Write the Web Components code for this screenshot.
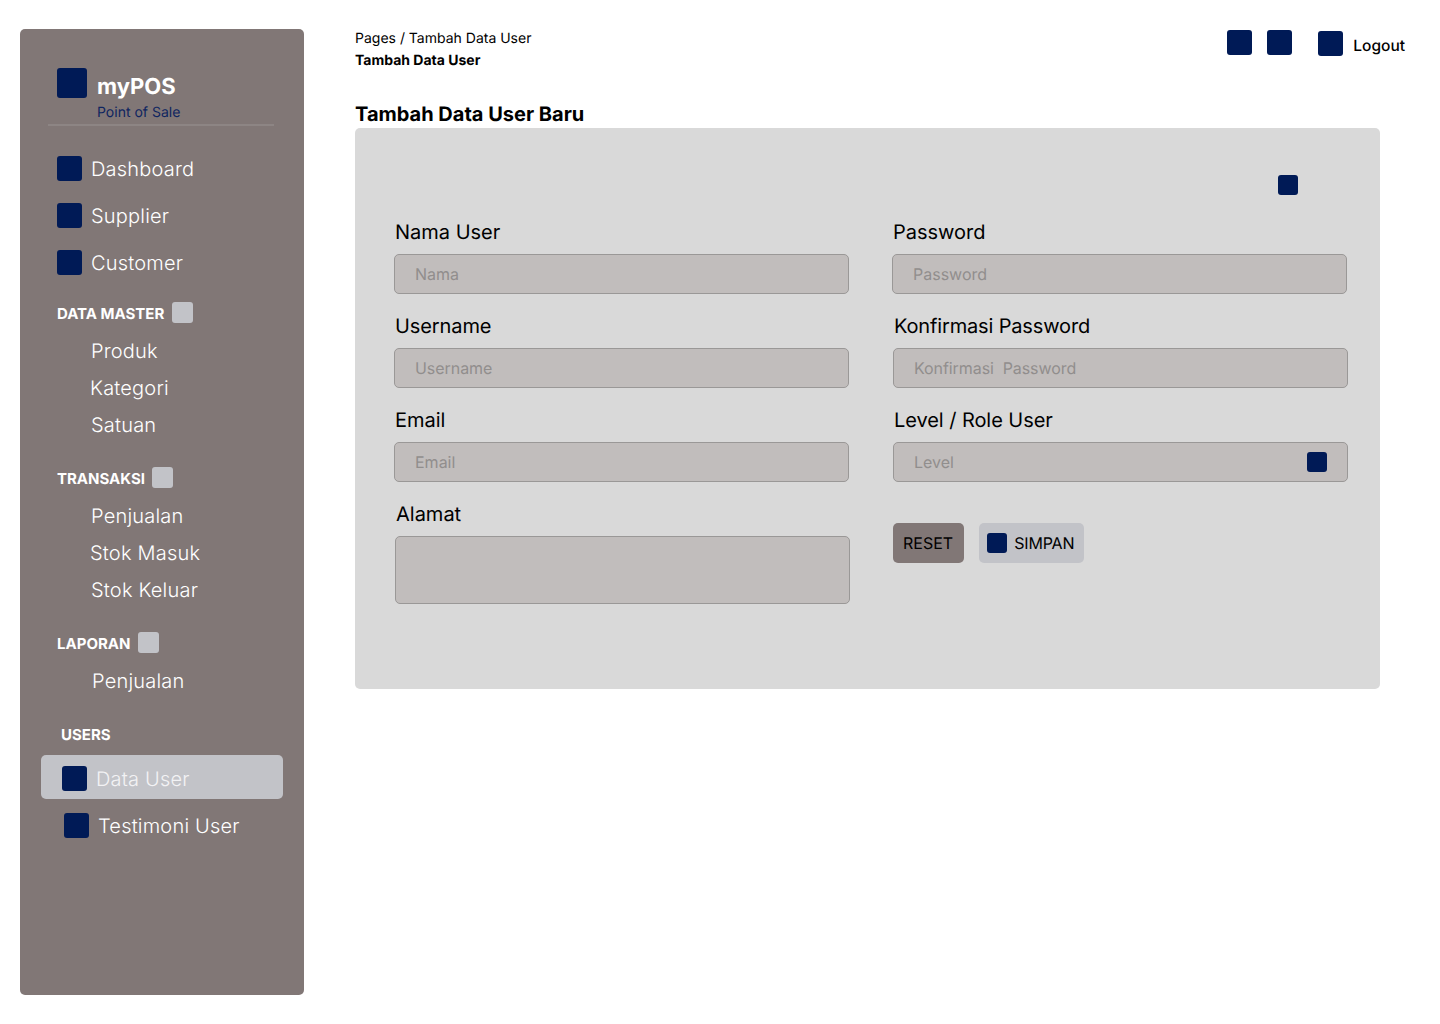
<!DOCTYPE html>
<html>
<head>
<meta charset="utf-8">
<title>Tambah Data User</title>
<style>
    html, body { margin: 0; padding: 0; background: #fff; }
    body { font-family: Inter, "Liberation Sans", sans-serif; color: #000; text-rendering: geometricPrecision; }
</style>
</head>
<body>
<app-shell>
    <app-sidebar slot="sidebar">
        <nav-item size="25" top="30" left="37">Dashboard</nav-item>
        <nav-item size="25" top="22" left="37">Supplier</nav-item>
        <nav-item size="25" top="22" left="37">Customer</nav-item>
        <nav-heading top="27" left="37" tile>DATA MASTER</nav-heading>
        <nav-sub top="16" left="71">Produk</nav-sub>
        <nav-sub top="13" left="70">Kategori</nav-sub>
        <nav-sub top="13" left="71">Satuan</nav-sub>
        <nav-heading top="30" left="37" gap="7" tile>TRANSAKSI</nav-heading>
        <nav-sub top="16" left="71">Penjualan</nav-sub>
        <nav-sub top="13" left="70">Stok Masuk</nav-sub>
        <nav-sub top="13" left="71">Stok Keluar</nav-sub>
        <nav-heading top="30" left="37" tile>LAPORAN</nav-heading>
        <nav-sub top="16" left="72">Penjualan</nav-sub>
        <nav-heading top="30" left="41">USERS</nav-heading>
        <nav-item size="25" top="11" left="21" active>Data User</nav-item>
        <nav-item size="25" top="14" left="44">Testimoni User</nav-item>
    </app-sidebar>
    <app-topbar slot="topbar"></app-topbar>
    <user-form slot="content">
        <form-field slot="left" label="Nama User" placeholder="Nama"></form-field>
        <form-field slot="left" label="Username" placeholder="Username" tight="-0.1"></form-field>
        <form-field slot="left" label="Email" placeholder="Email"></form-field>
        <form-field slot="left" label="Alamat" tall shift="1"></form-field>
        <form-field slot="right" label="Password" placeholder="Password" shift="-1"></form-field>
        <form-field slot="right" label="Konfirmasi Password" placeholder="Konfirmasi  Password" tight="-0.15"></form-field>
        <form-field slot="right" label="Level / Role User" placeholder="Level" select tight="-0.06"></form-field>
        <form-actions slot="right"></form-actions>
    </user-form>
</app-shell>

<script>
class BaseElement extends HTMLElement {

    static template() {
        return ``;
    }

    constructor() {
        super();
        this.attachShadow({ mode: 'open' });
    }

    connectedCallback() {
        this.shadowRoot.innerHTML = this.constructor.template(this);
    }
}

class NavyIcon extends BaseElement {
    static template(el) {
        const size = el.getAttribute('size') || 25;
        const radius = el.getAttribute('radius') || 3;
        return `
            <style>
                :host {
                    display: block;
                    flex: none;
                    width: ${size}px;
                    height: ${size}px;
                    border-radius: ${radius}px;
                    background: var(--tile, #001a56);
                }
            </style>
        `;
    }
}

class AppShell extends BaseElement {
    static template() {
        return `
            <style>
                :host {
                    display: flex;
                    width: 1440px;
                    height: 1024px;
                    box-sizing: border-box;
                    padding: 29px 60px 29px 20px;
                    gap: 51px;
                }
                main {
                    flex: 1;
                    min-width: 0;
                    display: flex;
                    flex-direction: column;
                }
            </style>
            <slot name="sidebar"></slot>
            <main>
                <slot name="topbar"></slot>
                <slot name="content"></slot>
            </main>
        `;
    }
}

class AppSidebar extends BaseElement {
    static template() {
        return `
            <style>
                :host {
                    display: block;
                    flex: none;
                    width: 284px;
                    height: 966px;
                    box-sizing: border-box;
                    padding: 39px 21px 0 0;
                    background: #817776;
                    border-radius: 5px;
                    color: #fff;
                }
                .brand {
                    display: flex;
                    gap: 10px;
                    padding-left: 37px;
                }
                .brand h1 {
                    margin: 6px 0 0;
                    font-size: 22px;
                    line-height: 27px;
                    font-weight: 700;
                }
                .brand p {
                    margin: 3px 0 0;
                    font-size: 14px;
                    line-height: 17px;
                    color: #0f2560;
                }
                hr {
                    margin: 3px 9px 0 28px;
                    border: none;
                    height: 2px;
                    background: #8d8584;
                }
                nav { display: block; }
            </style>
            <div class="brand">
                <navy-icon size="30"></navy-icon>
                <div>
                    <h1>myPOS</h1>
                    <p>Point of Sale</p>
                </div>
            </div>
            <hr>
            <nav><slot></slot></nav>
        `;
    }
}

class NavItem extends BaseElement {
    static template(el) {
        const active = el.hasAttribute('active');
        return `
            <style>
                :host {
                    display: flex;
                    align-items: center;
                    gap: 9px;
                    box-sizing: border-box;
                    height: ${active ? 44 : 25}px;
                    margin-top: ${el.getAttribute('top')}px;
                    margin-left: ${active ? 21 : 0}px;
                    padding-left: ${active ? 21 : el.getAttribute('left')}px;
                    font-size: 20px;
                    font-weight: 300;
                    letter-spacing: 0.2px;
                    line-height: 25px;
                    color: #fff;
                    ${active ? 'padding-top: 3px; background: #c2c3c8; border-radius: 5px; color: #f2f2f4;' : ''}
                }
                span { position: relative; top: 1px; }
            </style>
            <navy-icon size="${el.getAttribute('size')}"></navy-icon>
            <span><slot></slot></span>
        `;
    }
}

class NavHeading extends BaseElement {
    static template(el) {
        return `
            <style>
                :host {
                    display: flex;
                    align-items: center;
                    gap: ${el.getAttribute('gap') || 8}px;
                    height: 21px;
                    margin-top: ${el.getAttribute('top')}px;
                    padding-left: ${el.getAttribute('left')}px;
                    font-size: 15px;
                    font-weight: 700;
                    color: #fff;
                }
                span { position: relative; top: 1px; }
                navy-icon { --tile: #c2c3c8; }
            </style>
            <span><slot></slot></span>
            ${el.hasAttribute('tile') ? '<navy-icon size="21"></navy-icon>' : ''}
        `;
    }
}

class NavSub extends BaseElement {
    static template(el) {
        return `
            <style>
                :host {
                    display: block;
                    height: 24px;
                    margin-top: ${el.getAttribute('top')}px;
                    padding-left: ${el.getAttribute('left')}px;
                    font-size: 20px;
                    font-weight: 300;
                    letter-spacing: 0.2px;
                    line-height: 24px;
                    color: #fff;
                }
            </style>
            <slot></slot>
        `;
    }
}

class AppTopbar extends BaseElement {
    static template() {
        return `
            <style>
                :host {
                    display: flex;
                    justify-content: space-between;
                    height: 99px;
                    font-size: 14px;
                }
                .crumbs { padding-top: 1px; }
                .crumbs div:first-child { line-height: 18px; }
                .crumbs div:last-child { font-weight: 700; line-height: 18px; margin-top: 4px; }
                .actions {
                    display: flex;
                    align-items: flex-start;
                    margin-top: 1px;
                    margin-right: -25px;
                }
                .logout {
                    display: flex;
                    align-items: center;
                    gap: 10px;
                    margin-left: 25px;
                    margin-top: 1px;
                    font-size: 15.5px;
                    font-weight: 500;
                }
                .logout span { position: relative; top: 2px; }
                .actions > navy-icon + navy-icon { margin-left: 15px; }
                .actions > navy-icon:nth-child(2) { margin-right: 1px; }
            </style>
            <div class="crumbs">
                <div>Pages / Tambah Data User</div>
                <div>Tambah Data User</div>
            </div>
            <div class="actions">
                <navy-icon size="25"></navy-icon>
                <navy-icon size="25"></navy-icon>
                <div class="logout"><navy-icon size="25"></navy-icon><span>Logout</span></div>
            </div>
        `;
    }
}

class UserForm extends BaseElement {
    static template() {
        return `
            <style>
                :host { display: block; }
                h2 {
                    margin: -26px 0 0;
                    padding: 0 0 2px;
                    font-size: 20px;
                    line-height: 24px;
                    font-weight: 700;
                }
                .card {
                    box-sizing: border-box;
                    width: 1025px;
                    height: 561px;
                    padding: 47px 32px 0 39px;
                    background: #d9d9d9;
                    border-radius: 5px;
                }
                .tool { display: flex; justify-content: flex-end; padding-right: 50px; }
                .cols {
                    display: grid;
                    grid-template-columns: 455px 455px;
                    column-gap: 44px;
                    margin-top: 25px;
                }
                .col { display: flex; flex-direction: column; gap: 20px; }
            </style>
            <h2>Tambah Data User Baru</h2>
            <div class="card">
                <div class="tool"><navy-icon size="20"></navy-icon></div>
                <div class="cols">
                    <div class="col"><slot name="left"></slot></div>
                    <div class="col"><slot name="right"></slot></div>
                </div>
            </div>
        `;
    }
}

class FormField extends BaseElement {
    static template(el) {
        const tall = el.hasAttribute('tall');
        const shift = el.getAttribute('shift') || 0;
        const tight = el.getAttribute('tight') || 0;
        return `
            <style>
                :host {
                    display: block;
                    margin-left: ${shift}px;
                    margin-right: ${-shift}px;
                }
                label {
                    display: block;
                    height: 24px;
                    padding-left: 1px;
                    font-size: 20px;
                    line-height: 24px;
                    letter-spacing: ${tight}px;
                    color: #000;
                    margin-bottom: 10px;
                }
                .control {
                    box-sizing: border-box;
                    display: flex;
                    align-items: center;
                    justify-content: space-between;
                    height: ${tall ? 68 : 40}px;
                    padding: 0 20px;
                    background: #c1bdbc;
                    border: 1px solid #9a9897;
                    border-radius: 5px;
                    font-size: 16px;
                    letter-spacing: ${tight / 2}px;
                    color: #918e8d;
                }
            </style>
            <label>${el.getAttribute('label')}</label>
            <div class="control">
                <span style="white-space: pre">${el.getAttribute('placeholder') || ''}</span>
                ${el.hasAttribute('select') ? '<navy-icon size="20"></navy-icon>' : ''}
            </div>
        `;
    }
}

class FormActions extends BaseElement {
    static template() {
        return `
            <style>
                :host {
                    display: flex;
                    gap: 15px;
                    margin-top: 21px;
                    font-size: 16px;
                    color: #000;
                }
                .btn {
                    display: flex;
                    align-items: center;
                    height: 40px;
                    border-radius: 5px;
                }
                .reset { background: #817776; padding: 0 11px 0 10px; }
                .save { background: #c2c3c8; padding: 0 10px 0 8px; gap: 7px; }
                .save span { letter-spacing: -0.15px; }
            </style>
            <div class="btn reset">RESET</div>
            <div class="btn save"><navy-icon size="20"></navy-icon><span>SIMPAN</span></div>
        `;
    }
}

customElements.define('navy-icon', NavyIcon);
customElements.define('app-shell', AppShell);
customElements.define('app-sidebar', AppSidebar);
customElements.define('nav-item', NavItem);
customElements.define('nav-heading', NavHeading);
customElements.define('nav-sub', NavSub);
customElements.define('app-topbar', AppTopbar);
customElements.define('user-form', UserForm);
customElements.define('form-field', FormField);
customElements.define('form-actions', FormActions);
</script>
</body>
</html>
